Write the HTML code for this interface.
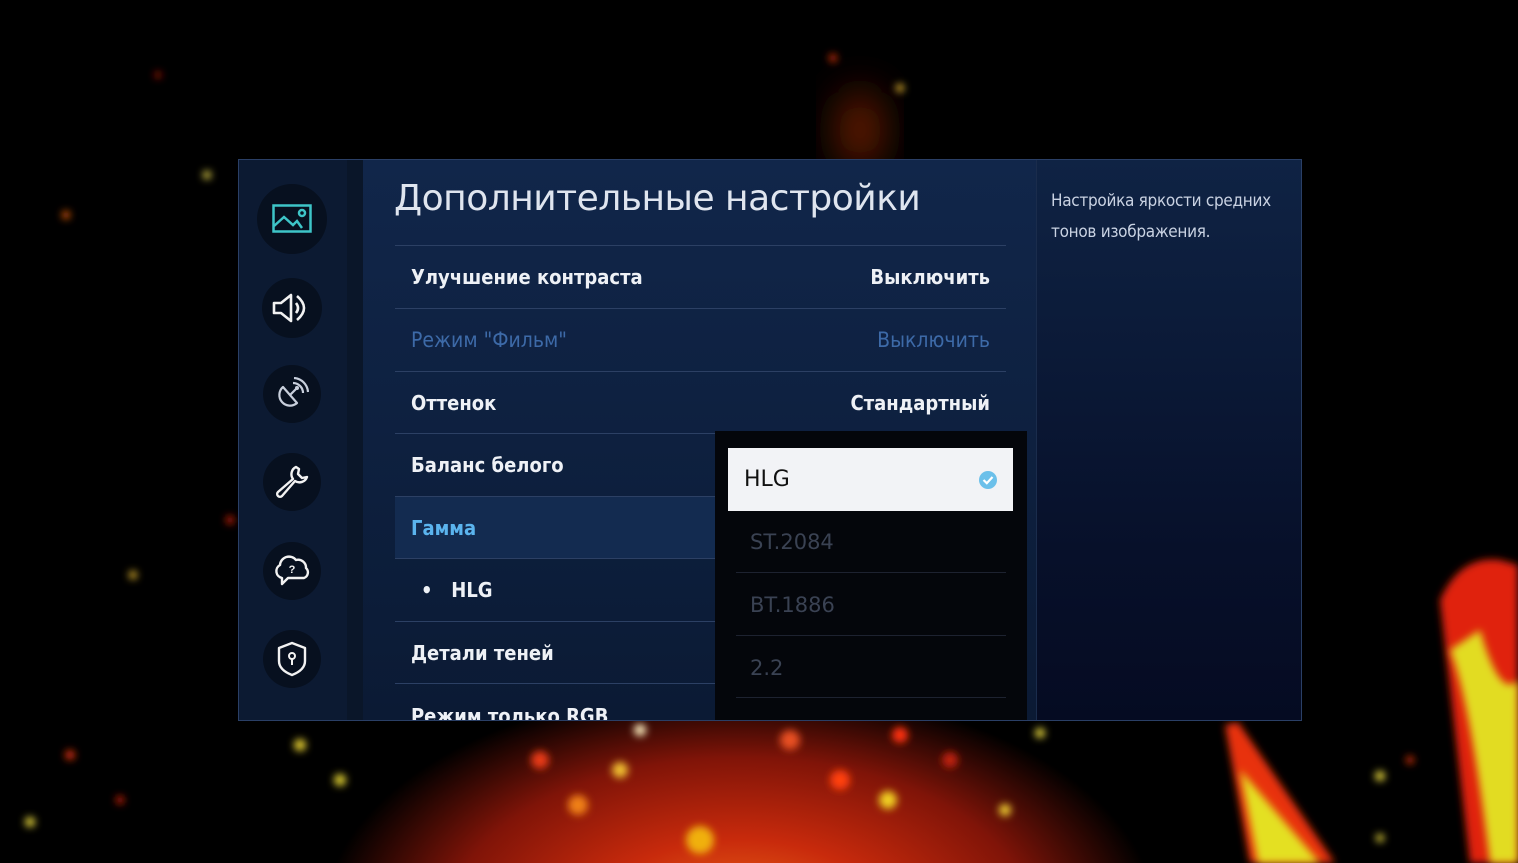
<!DOCTYPE html>
<html><head><meta charset="utf-8"><style>
*{margin:0;padding:0;box-sizing:border-box}
html,body{width:1518px;height:863px;overflow:hidden}
body{background:#000;position:relative;font-family:"Liberation Sans","DejaVu Sans",sans-serif}
.bg{position:absolute;left:0;top:0}
.glow{position:absolute;left:330px;top:690px;width:820px;height:330px;background:radial-gradient(ellipse at 50% 70%,#f07018 0%,#c82a0c 25%,#801408 50%,rgba(0,0,0,0) 72%)}
.panel{position:absolute;left:238px;top:159px;width:1064px;height:562px;border:1px solid #2a3f66;overflow:hidden}
.side{position:absolute;left:0;top:0;width:108px;height:100%;background:#0c1a32}
.strip{position:absolute;left:108px;top:0;width:16px;height:100%;background:#0a1629}
.main{position:absolute;left:124px;top:0;width:673px;height:100%;background:linear-gradient(180deg,#11264a,#0d1f3d 60%,#0b1a34)}
.desc{position:absolute;left:797px;top:0;width:267px;height:100%;background:linear-gradient(180deg,#0f2344,#07102a 70%,#050b22);border-left:1px solid #1a2c4c}
.desc p{position:absolute;left:14px;top:26px;width:250px;color:#c9d2e2;font-size:17px;line-height:31px;font-family:"DejaVu Sans Condensed","Liberation Sans Narrow","Liberation Sans",sans-serif;letter-spacing:-0.3px}
.ic{position:absolute;left:20px;width:66px;height:66px;border-radius:50%;background:#07101f;display:flex;align-items:center;justify-content:center}
.title{position:absolute;left:31px;top:18px;color:#dfe5ef;font-size:36px;font-family:"DejaVu Sans","Liberation Sans",sans-serif;font-weight:normal;letter-spacing:-0.5px}
.row{position:absolute;left:32px;width:611px;height:62px;border-top:1px solid #2c4064;color:#eef1f6;font-size:20px;font-weight:bold;font-family:"DejaVu Sans Condensed","Liberation Sans",sans-serif}
.row span{position:absolute;top:19px}
.row .l{left:16px}.row .r{right:16px}
.dd{position:absolute;left:352px;top:271px;width:312px;height:300px;background:#04060b}
.sel{position:absolute;left:13px;top:17px;width:285px;height:63px;background:#f2f3f6;color:#111;font-size:22px;font-family:"DejaVu Sans","Liberation Sans",sans-serif}
.opt{position:absolute;left:21px;width:270px;height:62px;color:#3a4253;font-size:21px;font-family:"DejaVu Sans","Liberation Sans",sans-serif}
</style></head><body>
<div class="glow"></div>
<svg class="bg" width="1518" height="863">
<defs>
<filter id="b" x="-50%" y="-50%" width="200%" height="200%"><feGaussianBlur stdDeviation="4"/></filter>
<filter id="b2" x="-50%" y="-50%" width="200%" height="200%"><feGaussianBlur stdDeviation="20"/></filter>
</defs>
<ellipse cx="860" cy="130" rx="22" ry="40" fill="#6a1e06" filter="url(#b2)"/>
<path d="M1440 600 Q1460 555 1500 560 L1518 565 L1518 863 L1470 863 Z" fill="#e02010" filter="url(#b)"/>
<path d="M1450 650 Q1470 700 1490 863 L1518 863 L1518 680 Q1500 700 1480 630 Z" fill="#e2dc20" filter="url(#b)"/>
<path d="M1225 725 L1238 722 L1335 863 L1250 863 Z" fill="#e83010" filter="url(#b)"/>
<path d="M1240 770 L1320 863 L1258 863 Z" fill="#e4e020" filter="url(#b)"/>
<g filter="url(#b)">
<circle cx="540" cy="760" r="9" fill="#e83a18"/><circle cx="620" cy="770" r="8" fill="#f0c030"/><circle cx="578" cy="805" r="10" fill="#f08018"/>
<circle cx="790" cy="740" r="10" fill="#e85020"/><circle cx="840" cy="780" r="10" fill="#ff4010"/><circle cx="888" cy="800" r="9" fill="#f0d020"/>
<circle cx="640" cy="730" r="6" fill="#fff0c0"/><circle cx="700" cy="840" r="14" fill="#f0b010"/><circle cx="900" cy="735" r="8" fill="#ff3010"/>
<circle cx="950" cy="760" r="8" fill="#c02010"/><circle cx="1005" cy="810" r="6" fill="#f0d030"/><circle cx="1040" cy="733" r="5" fill="#f0e040"/>
<circle cx="340" cy="780" r="6" fill="#e0d030"/><circle cx="300" cy="745" r="6" fill="#e8d030"/><circle cx="70" cy="755" r="5" fill="#e03010"/>
<circle cx="30" cy="822" r="5" fill="#f0e040"/><circle cx="207" cy="175" r="4" fill="#f0e050"/><circle cx="66" cy="215" r="4" fill="#f06010"/>
<circle cx="833" cy="58" r="4" fill="#e03010"/><circle cx="900" cy="88" r="4" fill="#f0c030"/><circle cx="133" cy="575" r="4" fill="#f0c030"/>
<circle cx="120" cy="800" r="4" fill="#e02010"/><circle cx="1380" cy="776" r="5" fill="#f0e040"/><circle cx="1410" cy="760" r="4" fill="#e03010"/>
<circle cx="1380" cy="838" r="4" fill="#f0e040"/><circle cx="230" cy="520" r="4" fill="#e02010"/><circle cx="158" cy="75" r="3" fill="#e02010"/>
</g>
</svg>
<div class="panel">
<div class="side">
<div class="ic" style="top:24px;width:70px;height:70px;left:18px"><svg width="40" height="30" viewBox="0 0 40 30"><rect x="1.5" y="1.5" width="37" height="26" fill="none" stroke="#3ec5c8" stroke-width="2.5"/><path d="M2 22 L12 13 L21 21 L25 17 L30 24" fill="none" stroke="#3ec5c8" stroke-width="2.5"/><circle cx="30" cy="9" r="3" fill="none" stroke="#3ec5c8" stroke-width="2.5"/></svg></div>
<div class="ic" style="top:118px;width:60px;height:60px;left:23px"><svg width="40" height="32" viewBox="0 0 40 32"><path d="M2 11 H9 L19 3 V29 L9 21 H2 Z" fill="none" stroke="#f2f2f2" stroke-width="2.6" stroke-linejoin="round"/><path d="M24 11 Q28 16 24 21" fill="none" stroke="#f2f2f2" stroke-width="2.6"/><path d="M25 4 Q39 16 25 28" fill="none" stroke="#f2f2f2" stroke-width="2.6"/></svg></div>
<div class="ic" style="top:205px;width:58px;height:58px;left:24px"><svg width="34" height="34" viewBox="0 0 34 34"><path d="M8 10 A10 10 0 0 0 22 26 Z" fill="none" stroke="#c8cfdc" stroke-width="2.2" stroke-linejoin="round"/><path d="M15 18 L21 12" stroke="#c8cfdc" stroke-width="2.2"/><circle cx="22" cy="11" r="2" fill="#c8cfdc"/><path d="M18 6 A10 10 0 0 1 28 16" fill="none" stroke="#c8cfdc" stroke-width="2.2"/><path d="M19 1 A15 15 0 0 1 33 15" fill="none" stroke="#c8cfdc" stroke-width="2.2"/></svg></div>
<div class="ic" style="top:293px;width:58px;height:58px;left:24px"><svg width="36" height="36" viewBox="0 0 36 36"><path d="M22 3 A8 8 0 0 0 19 15 L4 28 A2.5 2.5 0 0 0 8 32 L21 17 A8 8 0 0 0 33 13 L28 14 L24 10 L25 5 Z" fill="none" stroke="#f2f2f2" stroke-width="2.4" stroke-linejoin="round"/></svg></div>
<div class="ic" style="top:382px;width:58px;height:58px;left:24px"><svg width="40" height="34" viewBox="0 0 40 34"><path d="M10 24 A7 7 0 0 1 8 11 A9 9 0 0 1 24 6 A8 8 0 0 1 34 14 A6 6 0 0 1 32 24 H16 L10 30 Z" fill="none" stroke="#f2f2f2" stroke-width="2.4" stroke-linejoin="round"/><text x="20" y="19" font-size="11" font-weight="bold" fill="#f2f2f2" text-anchor="middle" font-family="Liberation Sans">?</text></svg></div>
<div class="ic" style="top:470px;width:58px;height:58px;left:24px"><svg width="30" height="36" viewBox="0 0 30 36"><path d="M15 2 L28 7 V20 Q28 29 15 34 Q2 29 2 20 V7 Z" fill="none" stroke="#f2f2f2" stroke-width="2.4" stroke-linejoin="round"/><circle cx="15" cy="15" r="3" fill="none" stroke="#f2f2f2" stroke-width="2"/><path d="M15 18 V24" stroke="#f2f2f2" stroke-width="2"/></svg></div>
</div>
<div class="strip"></div>
<div class="main">
<div class="title">Дополнительные настройки</div>
<div class="row" style="top:85px"><span class="l">Улучшение контраста</span><span class="r">Выключить</span></div>
<div class="row" style="top:148px;color:#3d6aa8;font-weight:normal;font-size:21px"><span class="l">Режим "Фильм"</span><span class="r">Выключить</span></div>
<div class="row" style="top:211px"><span class="l">Оттенок</span><span class="r">Стандартный</span></div>
<div class="row" style="top:273px"><span class="l">Баланс белого</span></div>
<div class="row" style="top:336px;background:#132b50;color:#5bb4ee"><span class="l">Гамма</span></div>
<div class="row" style="top:398px"><span class="l" style="left:26px">•&nbsp;&nbsp; HLG</span></div>
<div class="row" style="top:461px"><span class="l">Детали теней</span></div>
<div class="row" style="top:523px"><span class="l" style="top:20px">Режим только RGB</span></div>
<div class="dd">
<div class="sel"><span style="position:absolute;left:16px;top:19px">HLG</span><svg style="position:absolute;right:15px;top:22px" width="20" height="20" viewBox="0 0 20 20"><circle cx="10" cy="10" r="9" fill="#6cc0ea"/><path d="M5.5 10 L8.8 13.2 L14.5 7" fill="none" stroke="#fff" stroke-width="2.2"/></svg></div>
<div class="opt" style="top:80px"><span style="position:absolute;left:14px;top:19px">ST.2084</span></div>
<div class="opt" style="top:141px;border-top:1px solid #1d2230"><span style="position:absolute;left:14px;top:20px">BT.1886</span></div>
<div class="opt" style="top:204px;border-top:1px solid #1d2230"><span style="position:absolute;left:14px;top:20px">2.2</span></div>
<div class="opt" style="top:266px;border-top:1px solid #1d2230"></div>
</div>
</div>
<div class="desc"><p>Настройка яркости средних тонов изображения.</p></div>
</div>
</body></html>
